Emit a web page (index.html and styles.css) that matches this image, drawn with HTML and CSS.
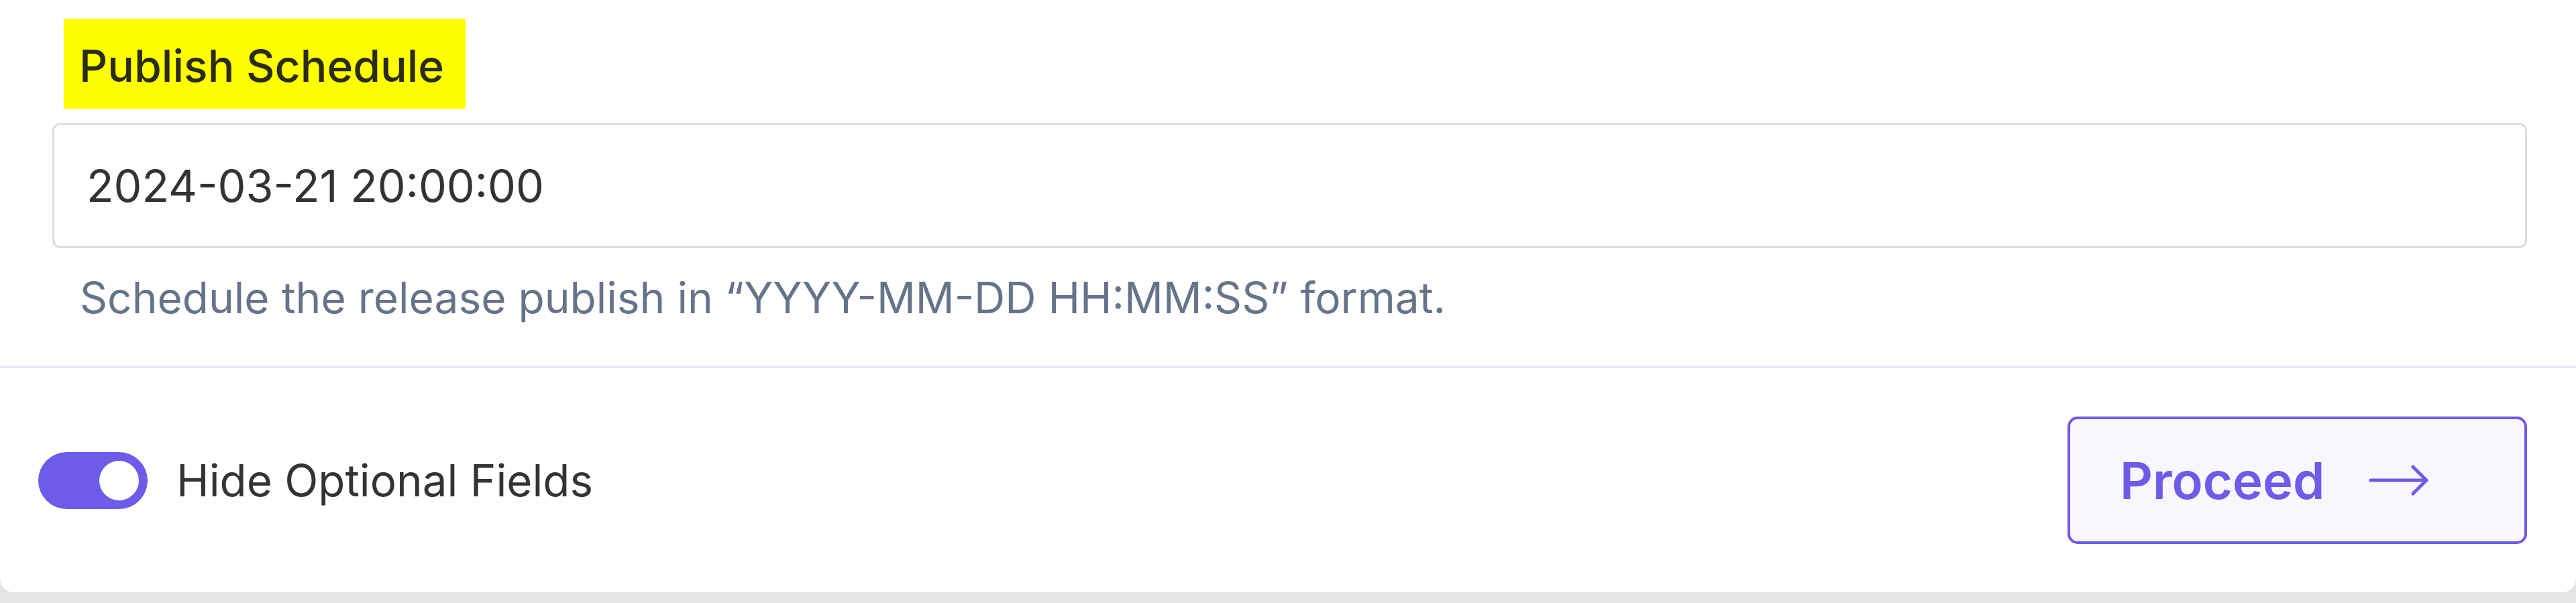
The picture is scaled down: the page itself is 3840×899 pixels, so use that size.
FILE: index.html
```html
<!DOCTYPE html>
<html lang="en">
<head>
  <meta charset="UTF-8">
  <title>Release Settings</title>
  <link rel="stylesheet" href="styles.css">
</head>
<body>

  <div class="card">
    <div class="field">
      <label class="field-label" for="publish-at">Publish Schedule</label>
      <input class="field-input" id="publish-at" type="text" value="2024-03-21 20:00:00">
      <p class="field-help">Schedule the release publish in “YYYY-MM-DD HH:MM:SS” format.</p>
    </div>

    <div class="card-footer">
      <label class="switch">
        <input type="checkbox" checked>
        <span class="track"><span class="knob"></span></span>
        <span class="switch-text">Hide Optional Fields</span>
      </label>

      <button class="btn-proceed" type="button">
        Proceed
        <svg class="arrow" width="90" height="46" viewBox="0 0 90 46" fill="none" stroke="currentColor" stroke-width="5" stroke-linecap="round" stroke-linejoin="round">
          <path d="M3 23H86"/>
          <path d="M66 3L86 23L66 43"/>
        </svg>
      </button>
    </div>
  </div>

</body>
</html>
```

FILE: styles.css
```css
html {
  background: #e4e5e7;
  font-family: Inter, 'Liberation Sans', sans-serif;
  color: #333;
}

body {
  margin: 0;
}

.card {
  background: #fff;
  height: 883px;
  border-radius: 0 0 20px 20px;
  box-shadow: 0 2px 6px rgba(0, 0, 0, 0.06);
  display: flex;
  flex-direction: column;
}

/* publish schedule field */
.field {
  padding: 28px 73px 62px 78px;
  border-bottom: 3px solid #e2e8f0;
}

.field-label {
  display: inline-block;
  margin-left: 17px;
  padding: 31px 32px 25px 23px;
  background: #ffff00;
  font-size: 66px;
  font-weight: 500;
  line-height: 78px;
  color: #2b2b1a;
}

.field-input {
  display: block;
  box-sizing: border-box;
  width: 100%;
  height: 187px;
  margin-top: 21px;
  padding: 0 48px;
  border: 3px solid #dcdcdc;
  border-radius: 12px;
  font-family: inherit;
  font-size: 66.5px;
  color: #333;
  background: #fff;
  outline: none;
}

.field-help {
  margin: 34px 0 0 41px;
  font-size: 64px;
  line-height: 80px;
  color: #667489;
}

/* footer with toggle and proceed button */
.card-footer {
  flex: 1;
  display: flex;
  align-items: center;
  justify-content: space-between;
  padding: 0 73px 0 57px;
}

.switch {
  display: flex;
  align-items: center;
  gap: 43px;
  cursor: pointer;
}

.switch input {
  display: none;
}

.track {
  display: flex;
  align-items: center;
  justify-content: flex-end;
  box-sizing: border-box;
  width: 163px;
  height: 85px;
  padding-right: 13px;
  border-radius: 43px;
  background: #6c5ce7;
}

.knob {
  width: 59px;
  height: 59px;
  border-radius: 50%;
  background: #fff;
}

.switch-text {
  font-size: 65.5px;
  color: #333;
}

.btn-proceed {
  display: flex;
  align-items: center;
  gap: 66px;
  box-sizing: border-box;
  width: 685px;
  height: 190px;
  padding: 0 0 0 74px;
  border: 4px solid #6c5ce7;
  border-radius: 15px;
  background: #f8f7fe;
  color: #6c5ce7;
  font-family: inherit;
  font-size: 76px;
  font-weight: 600;
  cursor: pointer;
}

.arrow {
  display: block;
}
```
